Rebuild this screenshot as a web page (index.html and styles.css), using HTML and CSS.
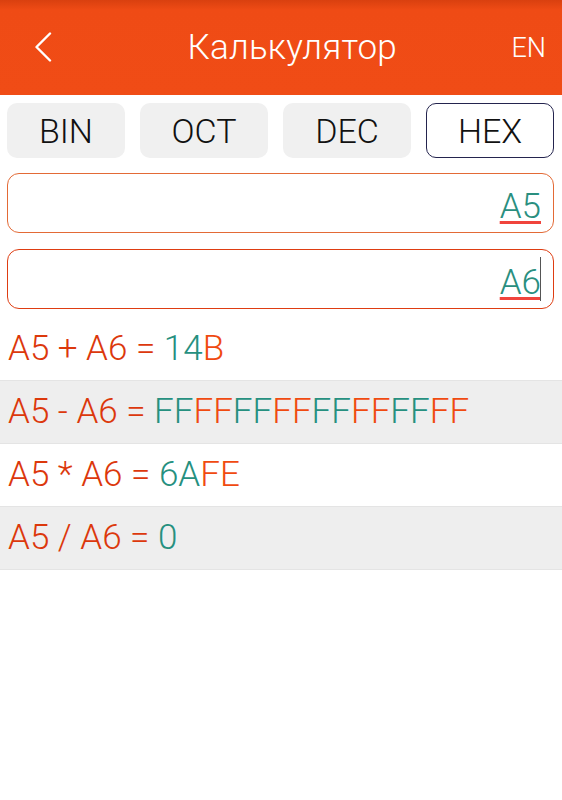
FILE: index.html
```html
<!DOCTYPE html>
<html lang="ru">
<head>
<meta charset="utf-8">
<title>Калькулятор</title>
<link rel="stylesheet" href="styles.css">
</head>
<body>
<header class="appbar">
  <span class="back">
    <svg width="18" height="30" viewBox="0 0 18 30"><path d="M16 1.5 L2.5 15 L16 28.5" fill="none" stroke="#fff" stroke-width="2.4" stroke-linecap="round" stroke-linejoin="round"/></svg>
  </span>
  <h1 class="title">Калькулятор</h1>
  <span class="lang">EN</span>
</header>
<nav class="bases">
  <button class="base narrow">BIN</button>
  <button class="base">OCT</button>
  <button class="base">DEC</button>
  <button class="base active">HEX</button>
</nav>
<section class="inputs">
  <div class="field"><span class="val">A5</span></div>
  <div class="field focused"><span class="val">A6</span><span class="caret"></span></div>
</section>
<ul class="results">
  <li class="row"><span class="expr">A5 + A6 = </span><span class="t">14</span><span class="o">B</span></li>
  <li class="row alt"><span class="expr">A5 - A6 = </span><span class="t">FF</span><span class="o">FF</span><span class="t">FF</span><span class="o">FF</span><span class="t">FF</span><span class="o">FF</span><span class="t">FF</span><span class="o">FF</span></li>
  <li class="row"><span class="expr">A5 * A6 = </span><span class="t">6A</span><span class="o">FE</span></li>
  <li class="row alt"><span class="expr">A5 / A6 = </span><span class="t">0</span></li>
</ul>
</body>
</html>
```
FILE: styles.css
```css
* { box-sizing: border-box; }
html, body { margin: 0; padding: 0; background: #fff; }
body { font-family: Roboto, "Noto Sans", sans-serif; font-weight: 300; width: 562px; }

.appbar {
  height: 95px;
  background: linear-gradient(to bottom, #d9400f 0, #ef4b15 10px, #f04c16 100%);
  display: flex;
  align-items: center;
  padding: 0 16px 0 34px;
  color: #fff;
}
.back { display: flex; width: 18px; height: 30px; margin-top: -1px; }
.title {
  flex: 1;
  margin: 0;
  text-align: center;
  font-size: 35px;
  font-weight: 300;
  letter-spacing: 0.2px;
  padding-left: 21px;
}
.lang { font-size: 27px; font-weight: 300; }

.bases {
  display: flex;
  gap: 15px;
  padding: 8px 8px 0 7px;
}
.base {
  flex: 0 0 128px;
  height: 55px;
  border: 1.5px solid transparent;
  border-radius: 10px;
  background: #f0f0f0;
  font-family: Roboto, sans-serif;
  font-weight: 300;
  font-size: 34px;
  color: #111;
  padding: 0;
}
.base.narrow { flex-basis: 118px; }
.base.active { background: #fff; border-color: #24244e; }

.inputs {
  display: flex;
  flex-direction: column;
  gap: 16px;
  padding: 15px 8px 0 7px;
}
.field {
  height: 60px;
  border: 1.5px solid #e36a36;
  border-radius: 12px;
  display: flex;
  justify-content: flex-end;
  align-items: center;
  padding: 6px 12px 0 0;
  position: relative;
}
.field.focused { border-color: #de3d12; }
.val {
  font-size: 35px;
  color: #2a8f7f;
  line-height: 1;
  text-decoration: underline;
  text-decoration-color: #f0443c;
  text-decoration-thickness: 3px;
  text-underline-offset: 3px;
}
.caret {
  position: absolute;
  right: 12px;
  top: 7px;
  width: 1px;
  height: 44px;
  background: #555;
}

.results { list-style: none; margin: 9px 0 0; padding: 0; }
.row {
  height: 63px;
  display: flex;
  align-items: center;
  padding: 0 0 2px 8px;
  font-size: 35px;
  border-bottom: 1px solid #e4e4e4;
  white-space: pre;
}
.row.alt { background: #eeeeee; }
.expr { color: #dc380c; }
.t { color: #26907f; }
.o { color: #f04a10; }
```
